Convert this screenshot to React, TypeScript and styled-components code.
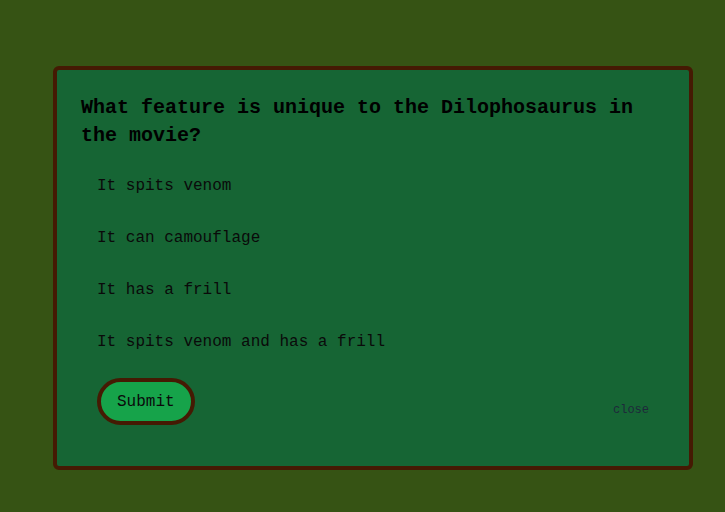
import React from "react";
import styled, { createGlobalStyle } from "styled-components";

const Global = createGlobalStyle`
  html, body { margin: 0; padding: 0; }
  body { background: #365314; font-family: "Liberation Mono", monospace; }
`;

const Page = styled.div`
  min-height: 512px;
  box-sizing: border-box;
  padding: 66px 32px 42px 53px;
  background: #365314;
`;

const Card = styled.div`
  box-sizing: border-box;
  width: 640px;
  height: 404px;
  background: #166534;
  border: 4px solid #451a03;
  border-radius: 6px;
  padding: 24px 24px 40px 24px;
  display: flex;
  flex-direction: column;
`;

const Title = styled.h2`
  margin: 0;
  font-family: "Liberation Mono", monospace;
  font-size: 20px;
  line-height: 28px;
  font-weight: 700;
  color: #000;
`;

const Options = styled.div`
  margin-top: 10px;
  display: flex;
  flex-direction: column;
`;

const Option = styled.div`
  padding: 14px 16px;
  font-size: 16px;
  line-height: 24px;
  color: #0a0a0a;
  cursor: pointer;
`;

const Footer = styled.div`
  margin-top: 10px;
  padding: 0 16px;
  display: flex;
  justify-content: space-between;
  align-items: flex-end;
`;

const SubmitButton = styled.button`
  box-sizing: border-box;
  height: 47px;
  padding: 0 16px;
  border: 4px solid #451a03;
  border-radius: 9999px;
  background: #16a34a;
  font-family: "Liberation Mono", monospace;
  font-size: 16px;
  color: #0a0a0a;
  cursor: pointer;
`;

const Close = styled.span`
  font-size: 12px;
  line-height: 16px;
  margin-bottom: 7px;
  color: #1e293b;
  cursor: pointer;
`;

const options = [
  "It spits venom",
  "It can camouflage",
  "It has a frill",
  "It spits venom and has a frill",
];

export default function App() {
  return (
    <>
      <Global />
      <Page>
        <Card>
          <Title>What feature is unique to the Dilophosaurus in the movie?</Title>
          <Options>
            {options.map((o) => (
              <Option key={o}>{o}</Option>
            ))}
          </Options>
          <Footer>
            <SubmitButton>Submit</SubmitButton>
            <Close>close</Close>
          </Footer>
        </Card>
      </Page>
    </>
  );
}
